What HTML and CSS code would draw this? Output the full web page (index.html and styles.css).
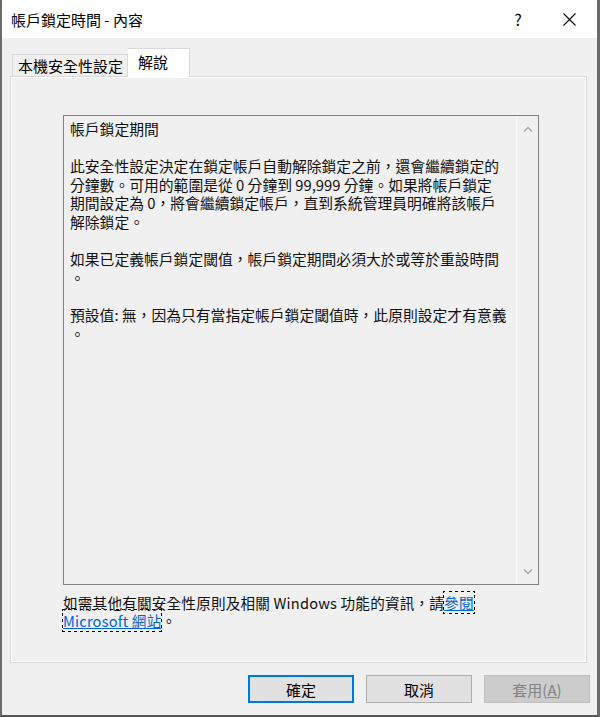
FILE: index.html
```html
<!DOCTYPE html>
<html lang="zh-Hant">
<head>
    <meta charset="UTF-8">
    <title>帳戶鎖定時間 - 內容</title>
    <link rel="stylesheet" href="styles.css">
</head>
<body>
    <div class="window">
        <div class="titlebar">
            <span class="title">帳戶鎖定時間 - 內容</span>
            <span class="help">?</span>
            <span class="close">
                <svg width="13" height="13" viewBox="0 0 13 13"><path d="M0.5 0.5 L12.5 12.5 M12.5 0.5 L0.5 12.5" stroke="#000" stroke-width="1.1" fill="none"/></svg>
            </span>
        </div>

        <div class="dialog">
            <div class="tabs">
                <div class="tab">本機安全性設定</div>
                <div class="tab active">解說</div>
            </div>

            <div class="panel">
                <div class="textbox">
                    <div class="text">
                        <div>帳戶鎖定期間</div>
                        <div>&nbsp;</div>
                        <div>此安全性設定決定在鎖定帳戶自動解除鎖定之前，還會繼續鎖定的</div>
                        <div>分鐘數。可用的範圍是從 0 分鐘到 99,999 分鐘。如果將帳戶鎖定</div>
                        <div>期間設定為 0，將會繼續鎖定帳戶，直到系統管理員明確將該帳戶</div>
                        <div>解除鎖定。</div>
                        <div>&nbsp;</div>
                        <div>如果已定義帳戶鎖定閾值，帳戶鎖定期間必須大於或等於重設時間</div>
                        <div>。</div>
                        <div>&nbsp;</div>
                        <div>預設值: 無，因為只有當指定帳戶鎖定閾值時，此原則設定才有意義</div>
                        <div>。</div>
                    </div>
                    <div class="scrollbar">
                        <svg width="10" height="6" viewBox="0 0 10 6"><path d="M1 5.5 L5 1.5 L9 5.5" stroke="#a6a6a6" stroke-width="1.4" fill="none"/></svg>
                        <svg width="10" height="6" viewBox="0 0 10 6"><path d="M1 0.5 L5 4.5 L9 0.5" stroke="#a6a6a6" stroke-width="1.4" fill="none"/></svg>
                    </div>
                </div>
                <p class="more">如需其他有關安全性原則及相關 Windows 功能的資訊，請<span class="link">參閱<br>Microsoft 網站</span>。</p>
            </div>

            <div class="buttons">
                <button class="btn default">確定</button>
                <button class="btn">取消</button>
                <button class="btn disabled">套用(<u>A</u>)</button>
            </div>
        </div>
    </div>
</body>
</html>
```

FILE: styles.css
```css
/* ventana de propiedades estilo Windows */
body {
    margin: 0;
    background: #f0f0f0;
    font-family: "Noto Sans CJK TC", "Noto Sans", sans-serif;
    color: #000;
}

.window {
    width: 600px;
    height: 717px;
    box-sizing: border-box;
    border-left: 2px solid #6b6b6b;
    border-right: 3px solid #6b6b6b;
    border-bottom: 2px solid #555;
    background: #f0f0f0;
    display: flex;
    flex-direction: column;
    overflow: hidden;
}

/* BARRA DE TITULO */
.titlebar {
    height: 38px;
    flex-shrink: 0;
    background: #fff;
    display: flex;
    align-items: center;
    padding-left: 9px;
    font-size: 15px;
}
.title { flex: 1; }
.help {
    width: 20px;
    text-align: center;
    font-size: 16px;
    margin-right: 35px;
}
.close {
    display: flex;
    margin-right: 21px;
}

.dialog {
    flex: 1;
    padding: 10px 10px 0 8px;
    display: flex;
    flex-direction: column;
}

/* PESTANAS */
.tabs {
    display: flex;
    align-items: flex-end;
    padding-left: 2px;
    height: 29px;
    flex-shrink: 0;
    margin-bottom: -1px;
    position: relative;
    z-index: 2;
}
.tab {
    height: 22px;
    line-height: 21px;
    width: 116px;
    padding-left: 5px;
    box-sizing: border-box;
    font-size: 15px;
    border: 1px solid #d9d9d9;
    border-bottom: none;
    background: #f0f0f0;
    margin-bottom: 1px;
}
.tab.active {
    height: 29px;
    line-height: 26px;
    width: 62px;
    padding-left: 10px;
    background: #fff;
    margin-bottom: 0;
    border-left: none;
}

.panel {
    height: 587px;
    box-sizing: border-box;
    flex-shrink: 0;
    border: 1px solid #d9d9d9;
    box-shadow: inset 0 0 0 1px #fff;
    padding: 38px 0 0 52px;
}

/* CAJA DE TEXTO */
.textbox {
    width: 476px;
    height: 470px;
    box-sizing: border-box;
    border: 1px solid #828282;
    display: flex;
    background: #f0f0f0;
}
.text {
    flex: 1;
    padding: 4px 0 0 6px;
    font-size: 14.8px;
    line-height: 18.6px;
    white-space: nowrap;
    color: #111;
}
.scrollbar {
    width: 21px;
    border-left: 1px solid #fafafa;
    display: flex;
    flex-direction: column;
    justify-content: space-between;
    align-items: center;
    padding: 10px 0 9px;
}

.more {
    margin: 9px 0 0 0;
    font-size: 14.6px;
    line-height: 17.5px;
    color: #111;
    letter-spacing: 0.2px;
}
.link {
    color: #0066cc;
    text-decoration: underline;
    outline: 1px dotted #000;
}

/* BOTONES */
.buttons {
    display: flex;
    justify-content: flex-end;
    gap: 12px;
    padding: 12px 0 0 0;
    margin-right: -3px;
}
.btn {
    width: 106px;
    height: 28px;
    font-family: inherit;
    font-size: 15px;
    background: #e1e1e1;
    border: 1px solid #adadad;
    color: #000;
    padding: 0;
}
.btn.default { border: 2px solid #0078d7; }
.btn.disabled {
    background: #cccccc;
    border-color: #bfbfbf;
    color: #838383;
}
```
